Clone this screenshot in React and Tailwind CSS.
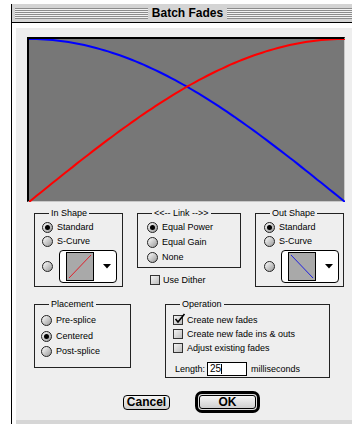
const sans = { fontFamily: '"Liberation Sans", Arial, sans-serif' };

function curve(fn) {
  const pts = [];
  for (let i = 0; i <= 80; i++) {
    const t = i / 80;
    pts.push(`${(t * 316).toFixed(1)},${(163 * (1 - fn(t))).toFixed(1)}`);
  }
  return pts.join(' ');
}

function Radio({ on }) {
  return (
    <div className="w-[11px] h-[11px] shrink-0 rounded-full border border-[#222] bg-linear-to-br from-white to-[#9a9a9a] flex items-center justify-center">
      {on && <div className="w-[5px] h-[5px] rounded-full bg-black" />}
    </div>
  );
}

function Check({ on }) {
  return (
    <div className="w-[10px] h-[10px] shrink-0 border border-[#333] bg-linear-to-br from-[#f4f4f4] to-[#bdbdbd] relative">
      {on && (
        <svg width="12" height="11" viewBox="0 0 12 11" className="absolute -top-[3px] left-0">
          <path d="M1.5 6 L4 9 L10.5 1" stroke="black" strokeWidth="1.6" fill="none" />
        </svg>
      )}
    </div>
  );
}

function Opt({ on, label, h = 'h-[14px]' }) {
  return (
    <div className={`flex items-center gap-[4px] ${h}`}>
      <Radio on={on} />
      <span className="text-[9px] leading-none">{label}</span>
    </div>
  );
}

function Group({ label, className, children, left = 'left-[14px]' }) {
  return (
    <div className={`relative border border-[#222] ${className}`}>
      <span className={`absolute -top-[6px] ${left} px-[2px] bg-[#eeeeee] text-[9px] leading-[11px]`}>{label}</span>
      {children}
    </div>
  );
}

function Picker({ dir }) {
  return (
    <div className="w-[58px] h-[33px] rounded-[4px] border border-black bg-white flex items-center pl-[6px]">
      <svg width="28" height="29" className="shrink-0">
        <rect x="0.5" y="0.5" width="27" height="28" fill="#a9a9a9" stroke="black" />
        {dir === 'in' ? (
          <line x1="3" y1="26" x2="25" y2="3" stroke="#e0202a" strokeWidth="1" />
        ) : (
          <line x1="3" y1="3" x2="25" y2="26" stroke="#2020e0" strokeWidth="1" />
        )}
      </svg>
      <svg width="8" height="5" className="ml-[9px]">
        <path d="M0 0 H8 L4 4.5 Z" fill="black" />
      </svg>
    </div>
  );
}

export default function App() {
  return (
    <div className="w-[352px] h-[424px] bg-white overflow-hidden pl-[11px] pt-[4px] text-black" style={sans}>
      <div className="border-l border-black h-full flex flex-col">
        {/* title bar */}
        <div className="h-[19px] bg-[#d4d4d4] flex items-center pl-[3px] border-b border-black">
          <div className="w-[133px] h-[11px] bg-[repeating-linear-gradient(to_bottom,#8c8c8c_0_1px,#f2f2f2_1px_2px)]" />
          <div className="w-[79px] text-center text-[12px] font-bold leading-none">Batch Fades</div>
          <div className="flex-1 h-[11px] bg-[repeating-linear-gradient(to_bottom,#8c8c8c_0_1px,#f2f2f2_1px_2px)]" />
        </div>

        <div className="flex-1 bg-white pl-[4px] pt-[5px] flex flex-col">
          <div className="h-[392px] bg-[#eeeeee] pl-[11px] pt-[9px]">
            {/* fade graph */}
            <div className="w-[318px] h-[165px] bg-[#777777] border-t-2 border-l-2 border-black border-r border-b border-r-[#c8c8c8] border-b-[#c8c8c8]">
              <svg width="316" height="163" className="block">
                <polyline points={curve((t) => Math.cos((t * Math.PI) / 2))} fill="none" stroke="#0000ff" strokeWidth="2" />
                <polyline points={curve((t) => Math.sin((t * Math.PI) / 2))} fill="none" stroke="#ff0000" strokeWidth="2" />
              </svg>
            </div>

            {/* shape / link row */}
            <div className="flex items-start gap-[14px] ml-[7px] mt-[11px]">
              <Group label="In Shape" className="w-[89px] h-[74px] pl-[7px] pt-[6px]">
                <Opt on label="Standard" />
                <Opt label="S-Curve" />
                <div className="flex items-center gap-[6px] mt-[2px]">
                  <Radio />
                  <Picker dir="in" />
                </div>
              </Group>

              <div className="w-[104px]">
                <Group label="<<-- Link -->>" className="h-[55px] pl-[9px] pt-[6px]">
                  <Opt on label="Equal Power" h="h-[15px]" />
                  <Opt label="Equal Gain" h="h-[15px]" />
                  <Opt label="None" h="h-[15px]" />
                </Group>
                <div className="flex items-center gap-[3px] ml-[13px] mt-[7px]">
                  <Check />
                  <span className="text-[9px] leading-none">Use Dither</span>
                </div>
              </div>

              <Group label="Out Shape" className="w-[89px] h-[74px] pl-[8px] pt-[6px]">
                <Opt on label="Standard" />
                <Opt label="S-Curve" />
                <div className="flex items-center gap-[6px] mt-[2px]">
                  <Radio />
                  <Picker dir="out" />
                </div>
              </Group>
            </div>

            {/* placement / operation row */}
            <div className="flex items-start gap-[34px] ml-[7px] mt-[17px]">
              <Group label="Placement" className="w-[97px] h-[64px] pl-[6px] pt-[8px]">
                <Opt label="Pre-splice" h="h-[15.5px]" />
                <Opt on label="Centered" h="h-[15.5px]" />
                <Opt label="Post-splice" h="h-[15.5px]" />
              </Group>

              <Group label="Operation" className="w-[165px] h-[74px] pl-[7px] pt-[8px]">
                {[
                  ['Create new fades', true],
                  ['Create new fade ins & outs', false],
                  ['Adjust existing fades', false],
                ].map(([t, on]) => (
                  <div key={t} className="flex items-center gap-[4px] h-[14px]">
                    <Check on={on} />
                    <span className="text-[9px] leading-none">{t}</span>
                  </div>
                ))}
                <div className="flex items-center mt-[7px] ml-[2px]">
                  <span className="text-[9px] leading-none w-[32px]">Length:</span>
                  <div className="w-[40px] h-[14px] border border-black bg-white flex items-center pl-[2px]">
                    <span className="text-[10px] leading-none">25</span>
                    <span className="w-px h-[10px] bg-black" />
                  </div>
                  <span className="text-[9px] leading-none ml-[4px]">milliseconds</span>
                </div>
              </Group>
            </div>

            {/* buttons */}
            <div className="flex items-center gap-[25px] ml-[96px] mt-[13px]">
              <div className="w-[47px] h-[15px] rounded-[4px] border border-black bg-linear-to-b from-[#f6f6f6] to-[#cfcfcf] flex items-center justify-center text-[12px] font-bold leading-none">
                Cancel
              </div>
              <div className="w-[65px] h-[22px] rounded-[7px] border-[3px] border-black p-px bg-[#dddddd]">
                <div className="h-full rounded-[3px] border border-black bg-linear-to-b from-[#f6f6f6] to-[#cfcfcf] flex items-center justify-center text-[12px] font-bold leading-none">
                  OK
                </div>
              </div>
            </div>
          </div>
          <div className="flex-1 bg-[#d6d6d6]" />
        </div>
      </div>
    </div>
  );
}
